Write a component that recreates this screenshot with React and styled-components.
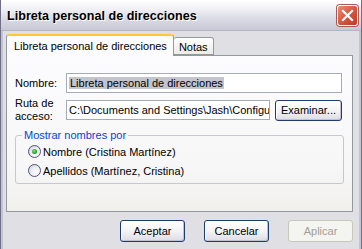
import styled, { createGlobalStyle } from "styled-components";

const GlobalStyle = createGlobalStyle`
    html, body {
        margin: 0;
        padding: 0;
        background: #e0dfe3;
    }
    body {
        font-family: "Liberation Sans", Arial, sans-serif;
        font-size: 11px;
        color: #000;
    }
`;

const App = () => {
    return (
        <>
            <GlobalStyle />
            <Window>
                <TitleBar>
                    <Title>Libreta personal de direcciones</Title>
                    <CloseButton aria-label="Cerrar">
                        <svg width="13" height="13" viewBox="0 0 13 13">
                            <path d="M2 2 L11 11 M11 2 L2 11" stroke="#fff" strokeWidth="2.2" strokeLinecap="square" />
                        </svg>
                    </CloseButton>
                </TitleBar>

                <Body>
                    <Tabs>
                        <Tab active>Libreta personal de direcciones</Tab>
                        <Tab>Notas</Tab>
                    </Tabs>

                    <Panel>
                        <FieldRow>
                            <Label>Nombre:</Label>
                            <TextBox>
                                <Selected>Libreta personal de direcciones</Selected>
                            </TextBox>
                        </FieldRow>

                        <FieldRow>
                            <Label>
                                Ruta de
                                <br />
                                acceso:
                            </Label>
                            <TextBox narrow>C:\Documents and Settings\Jash\Configu</TextBox>
                            <Button small>Examinar...</Button>
                        </FieldRow>

                        <GroupBox>
                            <Legend>Mostrar nombres por</Legend>
                            <RadioRow>
                                <Radio checked />
                                Nombre (Cristina Martínez)
                            </RadioRow>
                            <RadioRow>
                                <Radio />
                                Apellidos (Martínez, Cristina)
                            </RadioRow>
                        </GroupBox>
                    </Panel>

                    <ButtonBar>
                        <Button>Aceptar</Button>
                        <Button>Cancelar</Button>
                        <Button disabled>Aplicar</Button>
                    </ButtonBar>
                </Body>
            </Window>
        </>
    );
};

const Window = styled.div`
    width: 362px;
    height: 249px;
    box-sizing: border-box;
    background: #e0dfe3;
    border-left: 1px solid #6f6f86;
    border-right: 1px solid #6f6f86;
    box-shadow: inset 2px 0 0 #c4c3d4, inset -2px 0 0 #c4c3d4;
    display: flex;
    flex-direction: column;
    overflow: hidden;
`;

const TitleBar = styled.div`
    height: 30px;
    flex-shrink: 0;
    display: flex;
    align-items: center;
    justify-content: space-between;
    padding: 0 3px 0 6px;
    background: linear-gradient(
        to bottom,
        #ffffff 0%,
        #f3f3f7 25%,
        #dcdce6 60%,
        #c8c8d6 100%
    );
    border-bottom: 1px solid #b4b3c6;
`;

const Title = styled.div`
    font-family: "Liberation Sans", Arial, sans-serif;
    font-weight: bold;
    font-size: 12.6px;
    color: #000;
    text-shadow: 1px 1px 0 #ffffff;
    padding-top: 1px;
`;

const CloseButton = styled.div`
    width: 21px;
    height: 21px;
    box-sizing: border-box;
    border: 1px solid #ffffff;
    border-radius: 3px;
    background: linear-gradient(135deg, #e88b76 0%, #d5533d 55%, #c0392a 100%);
    box-shadow: 0 0 0 1px #a25a5a;
    display: flex;
    align-items: center;
    justify-content: center;
`;

const Body = styled.div`
    flex: 1;
    display: flex;
    flex-direction: column;
    padding: 3px 8px 0 5px;
`;

const Tabs = styled.div`
    display: flex;
    align-items: flex-end;
    height: 21px;
    position: relative;
    z-index: 1;
`;

const Tab = styled.div`
    box-sizing: border-box;
    height: ${(p) => (p.active ? "22px" : "18px")};
    margin-bottom: ${(p) => (p.active ? "-1px" : "0")};
    padding: ${(p) => (p.active ? "3px 6px 0 7px" : "2px 5px 0 5px")};
    border: 1px solid #919b9c;
    border-bottom: ${(p) => (p.active ? "none" : "1px solid #919b9c")};
    border-left: ${(p) => (p.active ? "1px solid #919b9c" : "none")};
    border-top: ${(p) => (p.active ? "2px solid #ffc83c" : "1px solid #919b9c")};
    border-radius: 3px 3px 0 0;
    background: ${(p) =>
        p.active ? "#fcfcfe" : "linear-gradient(to bottom, #ffffff, #ecebe6)"};
    white-space: nowrap;
    line-height: 14px;
`;

const Panel = styled.div`
    box-sizing: border-box;
    height: 157px;
    border: 1px solid #919b9c;
    background: linear-gradient(to bottom, #fcfcfe 0%, #f7f7f8 70%, #f1f0ec 100%);
    padding: 17px 8px 0 8px;
    display: flex;
    flex-direction: column;
    gap: 7px;
`;

const FieldRow = styled.div`
    display: flex;
    align-items: center;
    height: 20px;
`;

const Label = styled.div`
    width: 51px;
    flex-shrink: 0;
    line-height: 13px;
`;

const TextBox = styled.div`
    box-sizing: border-box;
    height: 20px;
    width: ${(p) => (p.narrow ? "204px" : "276px")};
    border: 1px solid #a5acb5;
    background: #ffffff;
    padding: 2px 2px 0 2px;
    line-height: 14px;
    white-space: nowrap;
    overflow: hidden;
`;

const Selected = styled.span`
    background: #c4c4cc;
    padding: 0 1px;
`;

const Button = styled.div`
    box-sizing: border-box;
    width: ${(p) => (p.small ? "67px" : "65px")};
    height: ${(p) => (p.small ? "21px" : "22px")};
    margin-left: ${(p) => (p.small ? "5px" : "0")};
    border: 1px solid ${(p) => (p.disabled ? "#c9c7ba" : "#1f3a6d")};
    border-radius: 3px;
    background: ${(p) =>
        p.disabled
            ? "#f4f4f0"
            : "linear-gradient(to bottom, #ffffff 0%, #f4f4f6 50%, #dcdce4 100%)"};
    box-shadow: ${(p) =>
        p.disabled ? "none" : "inset -1px -1px 0 #c1c1d0, inset 1px 1px 0 #ffffff"};
    color: ${(p) => (p.disabled ? "#a19f94" : "#000")};
    display: flex;
    align-items: center;
    justify-content: center;
    white-space: nowrap;
`;

const GroupBox = styled.fieldset`
    margin: 2px 0 0 0;
    box-sizing: border-box;
    width: 329px;
    height: 55px;
    border: 1px solid #c7c7d0;
    border-radius: 3px;
    padding: 4px 0 0 12px;
    display: flex;
    flex-direction: column;
    gap: 6px;
`;

const Legend = styled.legend`
    color: #0046d5;
    padding: 0 2px;
    margin-left: -6px;
    line-height: 12px;
`;

const RadioRow = styled.div`
    display: flex;
    align-items: center;
    gap: 2px;
    height: 13px;
`;

const Radio = styled.span`
    width: 13px;
    height: 13px;
    box-sizing: border-box;
    border-radius: 50%;
    border: 1px solid #50557a;
    background: radial-gradient(circle at 65% 65%, #ffffff 0%, #eeeef2 45%, #c6c6d2 100%);
    display: flex;
    align-items: center;
    justify-content: center;
    flex-shrink: 0;

    &::after {
        content: "";
        display: ${(p) => (p.checked ? "block" : "none")};
        width: 5px;
        height: 5px;
        border-radius: 50%;
        background: radial-gradient(circle at 40% 40%, #7ee07e 0%, #21a121 60%, #1a7f1a 100%);
    }
`;

const ButtonBar = styled.div`
    display: flex;
    justify-content: flex-end;
    gap: 19px;
    padding-top: 8px;
`;

export default App;
